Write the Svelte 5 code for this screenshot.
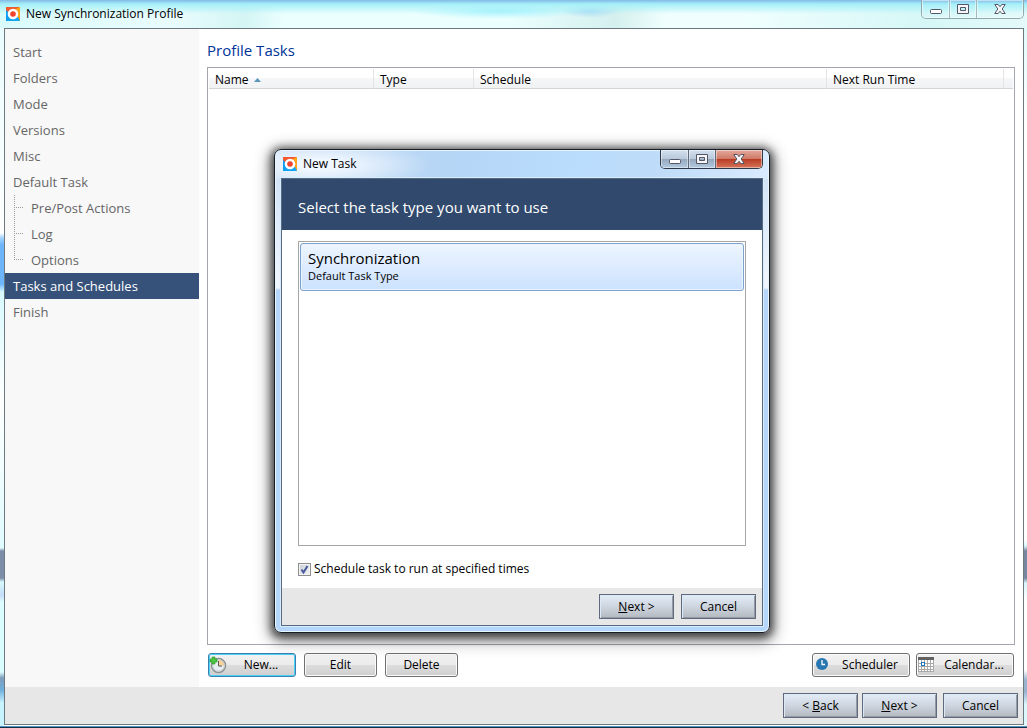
<script>
  const steps = [
    { name: 'Start' },
    { name: 'Folders' },
    { name: 'Mode' },
    { name: 'Versions' },
    { name: 'Misc' },
    { name: 'Default Task' },
    { name: 'Pre/Post Actions', child: true },
    { name: 'Log', child: true },
    { name: 'Options', child: true, last: true },
    { name: 'Tasks and Schedules' },
    { name: 'Finish' }
  ];
  let current = $state('Tasks and Schedules');
  let scheduled = $state(true);
</script>

{#snippet logo()}
  <svg class="logo" width="14" height="14" viewBox="0 0 14 14" aria-hidden="true">
    <path d="M0 0H14L0 14Z" fill="#f4582f" />
    <path d="M0 3L4 7L7 14H0Z" fill="#0c9df2" />
    <path d="M14 0V14H8L10 7L7 3Z" fill="#ffa21a" />
    <path d="M14 14H0L7 9L12 10Z" fill="#12a5f5" />
    <circle cx="7" cy="7" r="5.3" fill="#fff" />
    <circle cx="7" cy="7" r="2.8" fill="#f0442e" />
  </svg>
{/snippet}

{#snippet captionButtons(kind)}
  <div class="caption {kind}">
    <button aria-label="Minimize">
      <svg width="12" height="14" viewBox="0 0 12 14"><rect x=".5" y="7.500" width="11" height="4" rx="1" fill="#fff" stroke="#535666" /></svg>
    </button>
    <button aria-label="Maximize">
      <svg width="12" height="14" viewBox="0 0 12 14"><path d="M.5 2.500h11v9H.5zM3.500 5.500v3h5v-3z" fill="#f6f6f8" fill-rule="evenodd" stroke="#535666" /></svg>
    </button>
    <button class="close" aria-label="Close">
      <svg width="12" height="14" viewBox="0 0 12 14"><path d="M.8 2.500h3.400L6 4.700l1.800-2.200h3.400L8.200 7l3 4.500H7.800L6 9.300l-1.800 2.200H.8l3-4.500z" fill="#f6f6f8" stroke="#535666" /></svg>
    </button>
  </div>
{/snippet}

<div class="window">
  <header class="titlebar">
    {@render logo()}
    <span>New Synchronization Profile</span>
    {@render captionButtons('plain')}
  </header>

  <div class="client">
    <div class="body">
      <nav>
        {#each steps as step}
          <a
            href="#step"
            class:child={step.child}
            class:last={step.last}
            class:active={current === step.name}
            onclick={() => (current = step.name)}>{step.name}</a>
        {/each}
      </nav>

      <main>
        <h1>Profile Tasks</h1>
        <div class="grid">
          <table>
            <colgroup><col class="name" /><col class="type" /><col /><col class="next" /><col class="tail" /></colgroup>
            <thead>
              <tr>
                <th>Name <svg width="7" height="4" viewBox="0 0 7 4" aria-hidden="true"><path d="M0 4L3.500 0L7 4Z" fill="#5b95b8" /></svg></th>
                <th>Type</th>
                <th>Schedule</th>
                <th>Next Run Time</th>
                <td></td>
              </tr>
            </thead>
          </table>
        </div>
        <div class="actions">
          <button class="soft focus">
            <svg width="18" height="18" viewBox="0 0 18 18" aria-hidden="true">
              <circle cx="9.500" cy="9.500" r="7" fill="#e9eef2" stroke="#8d9296" stroke-width="1.500" />
              <path d="M9.500 9.500V3.500A6 6 0 0 1 15.500 9.500Z" fill="#fbd397" />
              <circle cx="9.500" cy="9.500" r="5.700" fill="none" stroke="#c5cacd" />
              <path d="M9.500 5V10H13" fill="none" stroke="#555" />
              <path d="M3 1h3v2h2v3H6v2H3V6H1V3h2z" fill="#4ec443" stroke="#249321" stroke-width=".6" />
            </svg>
            <span>New...</span>
          </button>
          <button class="soft">Edit</button>
          <button class="soft">Delete</button>
          <i></i>
          <button class="soft wide">
            <svg width="18" height="18" viewBox="0 0 18 18" aria-hidden="true">
              <circle cx="9" cy="8" r="6" fill="#2877b0" />
              <path d="M9 4V8.500H12" fill="none" stroke="#fff" stroke-width="1.300" />
            </svg>
            <span>Scheduler</span>
          </button>
          <button class="soft wide">
            <svg width="18" height="18" viewBox="0 0 18 18" aria-hidden="true">
              <rect x="1" y="2" width="16" height="14" fill="#fff" />
              <path d="M1 7.500H17M1 10.500H17M1 13.500H17M1.500 4V16M4.500 4V16M7.500 4V16M10.500 4V16M13.500 4V16M16.500 4V16M1 15.500H17" stroke="#a9a9a9" />
              <path d="M1 1H17V4H1Z" fill="#626262" />
              <rect x="4.500" y="6.500" width="3" height="3" fill="#fff" stroke="#1e78c0" />
            </svg>
            <span>Calendar...</span>
          </button>
        </div>
      </main>
    </div>

    <footer>
      <button class="steel">&lt; <u>B</u>ack</button>
      <button class="steel"><u>N</u>ext &gt;</button>
      <button class="steel apart">Cancel</button>
    </footer>
  </div>
</div>

<div class="dialog" role="dialog" aria-labelledby="task-title">
  <header class="titlebar">
    {@render logo()}
    <span id="task-title">New Task</span>
    {@render captionButtons('glass')}
  </header>
  <div class="client">
    <h2>Select the task type you want to use</h2>
    <div class="choose">
      <div class="types">
        <button class="option">
          <strong>Synchronization</strong>
          <small>Default Task Type</small>
        </button>
      </div>
      <label>
        <span class="check">
          <input type="checkbox" bind:checked={scheduled} />
          {#if scheduled}
            <svg width="13" height="13" viewBox="0 0 13 13" aria-hidden="true"><path d="M3.500 6.500L5.500 9.500L9.500 3" fill="none" stroke="#46599c" stroke-width="2" /></svg>
          {/if}
        </span>
        Schedule task to run at specified times
      </label>
    </div>
    <footer>
      <button class="steel"><u>N</u>ext &gt;</button>
      <button class="steel apart">Cancel</button>
    </footer>
  </div>
</div>

<style>
  :global(body) {
    margin: 0;
    font: 12px/16px 'Open Sans', 'Noto Sans', sans-serif;
    color: #000;
  }
  * { box-sizing: border-box; }
  button { font: inherit; color: inherit; margin: 0; padding: 0; }

  .window {
    height: 100vh;
    display: flex;
    flex-direction: column;
    padding: 0 3px 3px 4px;
    background:
      linear-gradient(#5a93bd 0 1px, #10304a 1px) bottom / 100% 2px no-repeat,
      linear-gradient(#83b9e8, #a5f0f8 4px, transparent 14px) top / 100% 28px no-repeat,
      radial-gradient(ellipse 90px 8px at 500px 11px, #a6f2fd, transparent) top / 100% 28px no-repeat,
      radial-gradient(ellipse 30px 7px at 590px 11px, #a9dcf5, transparent) top / 100% 28px no-repeat,
      linear-gradient(100deg, #d9fbfc, #e9fcfd 17%, #d4f5f5 24%, #ebfffe 28%, #eafffe 50%, #d4f0ee 60%, #f0fffe 65%, #f0fffe 72%, #d6f7f7 90%, #e5fafa) top / 100% 28px no-repeat,
      linear-gradient(#e8fcff, #fff 233px, #a0d3ff 238px, #6db5fb 245px 284px, #d8faff 292px, #fff 400px, #e0fbff 548px, #7d8da8 551px 578px, #d8fbff 582px, #c5dcf8 595px, #dcfdff 602px 672px, #7d9dbc 678px, #6fb0dd 690px, #c8f4ff 703px) left / 4px 100% no-repeat,
      linear-gradient(#d5fbfd, #fff 120px 540px, #d5f6ff 546px, #76879f 551px 578px, #d5f6ff 583px, #fff 600px 670px, #9ab4d0 680px 692px, #dcf8ff 705px) right / 3px 100% no-repeat;
  }
  .titlebar { display: flex; align-items: flex-start; }
  .window > .titlebar { height: 28px; padding-left: 2px; }
  .titlebar .logo { margin-top: 7px; }
  .titlebar span { flex: 1; margin: 6px 0 0 6px; }
  .caption { display: flex; border: 1px solid #8fa9ad; border-top: 0; border-radius: 0 0 5px 5px; overflow: hidden; }
  .caption button { width: 27px; height: 18px; border: 0; border-right: 1px solid #a2babd; background: none; display: grid; place-items: center; }
  .caption button:first-child { width: 28px; }
  .caption .close { width: 46px; border-right: 0; }
  .plain button { box-shadow: inset 0 0 0 1px #ffffff80; }

  .client { flex: 1; min-height: 0; display: flex; flex-direction: column; border: 1px solid #6c7a80; background: #fff; }
  .body { flex: 1; min-height: 0; display: flex; }
  nav { width: 194px; padding-top: 10px; background: #f8f8f8; font-size: 13px; line-height: 26px; }
  nav a { display: block; height: 26px; padding-left: 8px; color: #666; text-decoration: none; white-space: nowrap; }
  nav a.child {
    padding-left: 26px;
    background:
      repeating-linear-gradient(#999 0 1px, transparent 1px 2px) 9px 0 / 1px 26px no-repeat,
      repeating-linear-gradient(90deg, #999 0 1px, transparent 1px 2px) 9px 12px / 10px 1px no-repeat;
  }
  nav a.last {
    background:
      repeating-linear-gradient(#999 0 1px, transparent 1px 2px) 9px 0 / 1px 13px no-repeat,
      repeating-linear-gradient(90deg, #999 0 1px, transparent 1px 2px) 9px 12px / 10px 1px no-repeat;
  }
  nav a.active { background: #36527a; color: #fff; }

  main { flex: 1; min-width: 0; display: flex; flex-direction: column; padding: 9px 8px 10px; }
  h1 { margin: 0 0 5px; font-size: 15px; line-height: 24px; font-weight: 400; color: #003399; }
  .grid { flex: 1; border: 1px solid #a5a7ae; padding: 1px; }
  table { width: 100%; table-layout: fixed; border-collapse: separate; border-spacing: 0; }
  .name { width: 165px; }
  .type { width: 100px; }
  .next { width: 177px; }
  .tail { width: 9px; }
  th, td { height: 20px; padding: 2px 6px 0; text-align: left; font-weight: 400; border-bottom: 1px solid #d5d5d5; background: linear-gradient(#fff 45%, #f6f7f8 45%, #f1f2f4); }
  th { border-right: 1px solid #e3e4e6; }
  th svg { margin: 0 0 2px 2px; }
  td { padding: 0; }

  .actions { display: flex; gap: 8px; padding: 8px 1px 0; }
  .actions i { flex: 1; }
  .soft {
    width: 73px; height: 24px; display: flex; align-items: center; justify-content: center;
    border: 1px solid #707070; border-radius: 3px;
    background: linear-gradient(#f2f2f2, #ebebeb 50%, #dddddd 50%, #cfcfcf);
    box-shadow: inset 0 0 0 1px #fbfbfb;
  }
  .soft span { flex: 1; }
  .focus { width: 88px; border-color: #3c7fb1; box-shadow: inset 0 0 0 1px #4cd1f5; }
  .wide { width: 98px; }
  .wide + .wide { margin-left: -2px; }

  footer { display: flex; align-items: center; justify-content: flex-end; gap: 4px; height: 37px; padding-right: 5px; background: #e7e7e7; }
  .steel {
    width: 75px; height: 25px; border: 1px solid #5f6b7c;
    background: linear-gradient(#e3edf8, #cdd5df 50%, #b4b9c0);
    box-shadow: inset 1px 1px #dbe9f7, inset -1px -1px #949ba5;
  }
  .steel.apart { margin-left: 2px; }

  .dialog {
    position: absolute; left: 274px; top: 149px; width: 496px; height: 484px;
    display: flex; flex-direction: column; padding: 0 6px 6px;
    border: 1px solid #171d26; border-radius: 7px;
    background:
      radial-gradient(ellipse 110px 24px at 45px 15px, #f0f7ff 20%, transparent) top / 100% 29px no-repeat,
      linear-gradient(100deg, #cbdff5, #b5d5f5 35%, #b9dcfd 60%, #bfdcf8 78%, #d9ebff) top / 100% 29px no-repeat,
      linear-gradient(#cbdff5, #f0f6fe 138px, #b5d6f8 140px, #b3d6fa);
    box-shadow: inset 0 0 0 1px #e8f5ff, 0 2px 8px 3px #000000a0, 0 4px 16px 5px #00000055;
  }
  .dialog .titlebar { height: 28px; padding-left: 2px; }
  .dialog .client { border-color: #566a80; box-shadow: 0 0 0 1px #d7edff; }
  .dialog footer { gap: 5px; padding-right: 6px; }
  .glass { border-color: #30394a; }
  .glass button { border-color: #5d6a7a; background: linear-gradient(#d3e0ee, #b9c9db 48%, #94a7bd 50%, #b4cbe2); box-shadow: inset 0 0 0 1px #ffffff70; }
  .glass .close { background: linear-gradient(#e5aa9c, #cf7a68 48%, #b83a22 50%, #d6755a); }
  h2 { margin: 0; padding: 16px 16px 11px; background: #30496d; color: #fff; font-size: 15px; line-height: 24px; font-weight: 400; }
  .choose { flex: 1; display: flex; flex-direction: column; padding: 11px 16px; }
  .types { flex: 1; border: 1px solid #a5a5a5; padding: 1px; }
  .option {
    display: flex; flex-direction: column; width: 100%; height: 48px; padding: 4px 7px; text-align: left;
    border: 1px solid #7da2ce; border-radius: 3px; background: linear-gradient(#edf5ff, #cce2ff); box-shadow: inset 0 0 0 1px #ebf4fe;
  }
  strong { font-size: 15px; line-height: 20px; font-weight: 400; }
  small { font-size: 11px; line-height: 16px; }
  label { display: flex; align-items: center; gap: 3px; padding-top: 15px; }
  .check { display: grid; }
  .check > * { grid-area: 1 / 1; }
  .check svg { pointer-events: none; }
  input { appearance: none; width: 13px; height: 13px; margin: 0; border: 1px solid #8e8f8f; background: linear-gradient(135deg, #cbcfd5, #f3f3f4); box-shadow: inset 0 0 0 1px #f4f4f4; }
</style>
